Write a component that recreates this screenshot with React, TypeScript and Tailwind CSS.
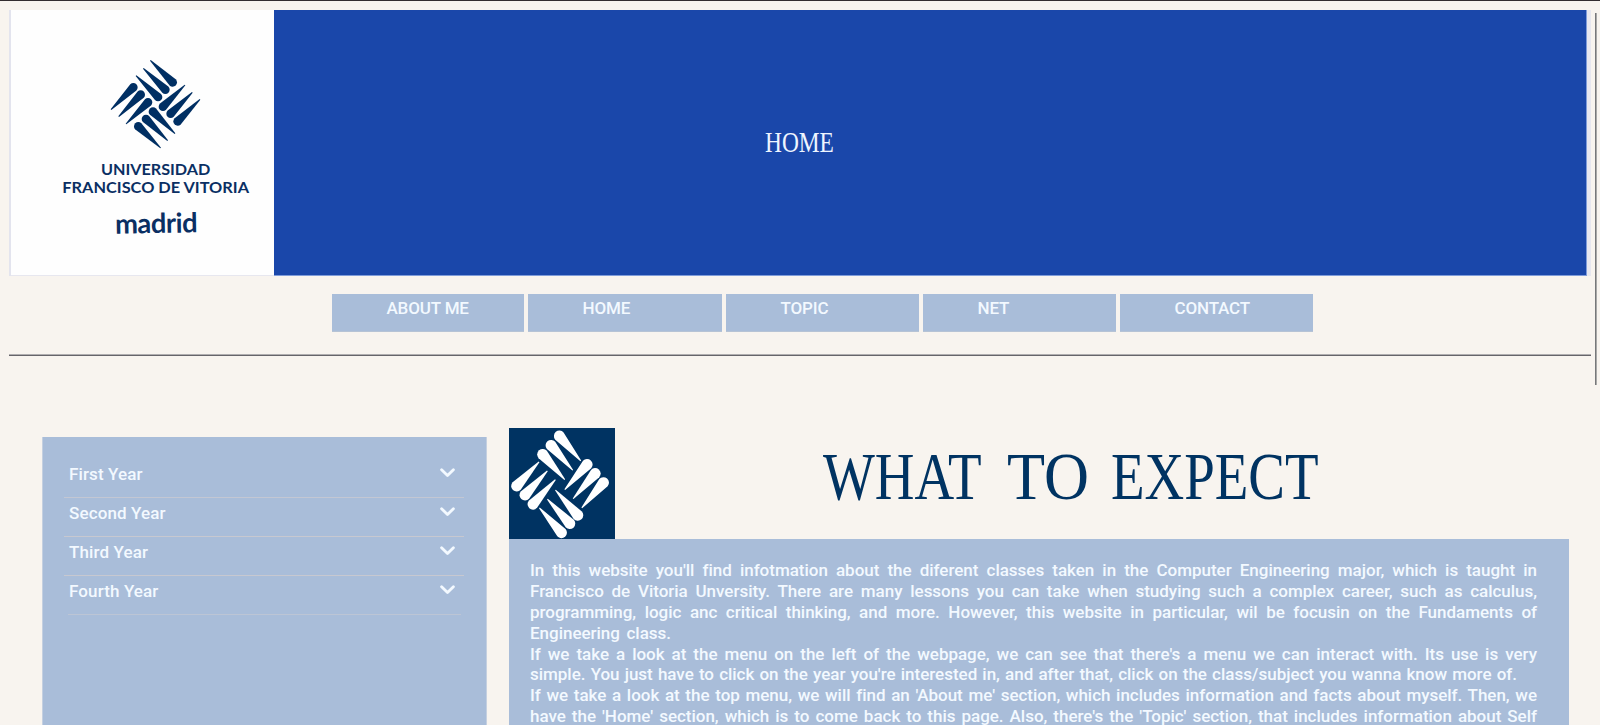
type Drop = [number, number, number, number];

const CREST: Drop[] = [
  [451, 181, 518, 247], [430, 205, 496, 269], [408, 227, 474, 291],
  [333, 329, 400, 262], [356, 350, 422, 284], [378, 372, 444, 307],
  [555, 255, 489, 320], [577, 277, 512, 341], [600, 298, 533, 364],
  [525, 401, 459, 335], [503, 422, 438, 357], [482, 444, 415, 379],
];

const EMBLEM: Drop[] = [
  [242, 122, 178, 48], [218, 150, 153, 76], [194, 178, 128, 103],
  [117, 125, 50, 197], [142, 152, 75, 224], [166, 178, 99, 251],
  [194, 208, 261, 133], [219, 235, 285, 160], [245, 262, 310, 187],
  [166, 209, 233, 284], [142, 236, 209, 309], [118, 262, 184, 336],
];

function dropPath([tx, ty, hx, hy]: Drop, r: number) {
  const len = Math.hypot(hx - tx, hy - ty);
  const px = (-(hy - ty) / len) * r;
  const py = ((hx - tx) / len) * r;
  const qx = (px / r) * 1.5;
  const qy = (py / r) * 1.5;
  return `M${tx + qx} ${ty + qy}L${hx + px} ${hy + py}A${r} ${r} 0 0 0 ${hx - px} ${hy - py}L${tx - qx} ${ty - qy}Z`;
}

function Crest() {
  return (
    <svg className="block h-[265px] w-[263px] shrink-0 bg-[#fefefe]" viewBox="33 30 789 795">
      <g fill="#002f63">
        {CREST.map((d, i) => (
          <path key={i} d={dropPath(d, 13)} />
        ))}
      </g>
      <g fill="#0a2f63" fontFamily="Lato, sans-serif" fontWeight="700">
        <text x="303" y="526" fontSize="47" textLength="328" lengthAdjust="spacingAndGlyphs">UNIVERSIDAD</text>
        <text x="187" y="578" fontSize="47" textLength="560" lengthAdjust="spacingAndGlyphs">FRANCISCO DE VITORIA</text>
        <text x="345" y="699" fontSize="82" textLength="248" lengthAdjust="spacing" transform="rotate(-1 468 670)">madrid</text>
      </g>
    </svg>
  );
}

function Emblem() {
  return (
    <svg className="block h-[111px] w-[105.5px] bg-[#003362]" viewBox="27 24 316 331" preserveAspectRatio="none">
      <g fill="#fff">
        {EMBLEM.map((d, i) => (
          <path key={i} d={dropPath(d, 16.5)} />
        ))}
      </g>
    </svg>
  );
}

const NAV = ["ABOUT ME", "HOME", "TOPIC", "NET", "CONTACT"];
const YEARS = ["First Year", "Second Year", "Third Year", "Fourth Year"];

const LINES: { text: string; style: string }[] = [
  { text: "In this website you'll find infotmation about the diferent classes taken in the Computer Engineering major, which is taught in", style: "w-[1007px] [text-align-last:justify]" },
  { text: "Francisco de Vitoria Unversity. There are many lessons you can take when studying such a complex career, such as calculus,", style: "w-[1007px] [text-align-last:justify]" },
  { text: "programming, logic anc critical thinking, and more. However, this website in particular, wil be focusin on the Fundaments of", style: "w-[1007px] [text-align-last:justify]" },
  { text: "Engineering class.", style: "w-[141px] [text-align-last:justify]" },
  { text: "If we take a look at the menu on the left of the webpage, we can see that there's a menu we can interact with. Its use is very", style: "w-[1007px] [text-align-last:justify]" },
  { text: "simple. You just have to click on the year you're interested in, and after that, click on the class/subject you wanna know more of.", style: "w-[987px] [text-align-last:justify]" },
  { text: "If we take a look at the top menu, we will find an 'About me' section, which includes information and facts about myself. Then, we", style: "w-[1007px] [text-align-last:justify]" },
  { text: "have the 'Home' section, which is to come back to this page. Also, there's the 'Topic' section, that includes information about Self", style: "w-[1007px] [text-align-last:justify]" },
];

export default function App() {
  return (
    <div className="flex h-[725px] w-[1600px] flex-col overflow-hidden border-t border-[#332d30] bg-[#f8f4ef] font-['Roboto',sans-serif] font-medium text-[#f3f9ff]">
      <div className="flex h-[384px] shrink-0">
        <div className="w-[1595px] pt-[9px]">
          <header className="ml-[9px] flex h-[266px] w-[1582px] border-l-2 border-[#e3e4ee] bg-[#e7e7ef]">
            <Crest />
            <div className="flex h-[266px] w-[1313px] items-center border-b border-r border-[#7f9cda] bg-[#1a47aa]">
              <span className="-mt-0.5 ml-[491px] origin-left scale-x-[0.78] font-['Liberation_Serif',serif] text-[30px] leading-none text-[#eef5ff]">HOME</span>
            </div>
          </header>
          <nav className="ml-[332px] mt-[18px] grid grid-cols-[192px_194px_193px_193px_193px] gap-1">
            {NAV.map((item) => (
              <a key={item} className="h-[38px] border-b border-[#b6c3d5] bg-[#a9bdd9] pl-[54.5px] pt-[3px] text-[17px] leading-[22px] tracking-[-0.15px]">{item}</a>
            ))}
          </nav>
          <hr className="ml-[9px] mt-[22px] h-[2px] w-[1582px] border-b border-t border-b-[#66656a] border-t-[#b0aeb0]" />
        </div>
        <div className="mt-[12px] h-[372px] w-[2px] border-l border-r border-l-[#77787a] border-r-[#a9a9a8]" />
      </div>
      <div className="flex h-[340px] shrink-0">
        <aside className="ml-[42px] mt-[52px] h-[288px] w-[445px] border-x border-[#c5d0e0] bg-[#a9bdd9] pl-[21px] pt-[22px]">
          {YEARS.map((year, i) => (
            <div
              key={year}
              className={
                i === 0
                  ? "flex h-[39px] w-[400px] items-start justify-between border-b border-[#c3c7d3] pl-[5px] pr-[9px] pt-[4px]"
                  : i === 3
                    ? "ml-1 flex h-[39px] w-[393px] items-start justify-between border-b border-[#bcc5d5] pl-[1px] pr-[6px] pt-[4px]"
                    : "flex h-[39px] w-[400px] items-start justify-between border-b border-[#c7c8d0] pl-[5px] pr-[9px] pt-[4px]"
              }
            >
              <span className="text-[17px] leading-[22px] tracking-[0.12px]">{year}</span>
              <svg className="mt-[5px] h-[10px] w-[15px]" viewBox="0 0 15 10" fill="none" stroke="#f3f9ff" strokeWidth="2.8" strokeLinecap="round" strokeLinejoin="round">
                <path d="M1.6 1.7L7.5 7.6L13.4 1.7" />
              </svg>
            </div>
          ))}
        </aside>
        <main className="ml-[22px] mt-[43px] w-[1060px]">
          <div className="flex h-[111px]">
            <Emblem />
            <h1 className="flex pl-[208px] pt-[11px] font-['Liberation_Serif',serif] text-[67px] font-normal leading-[74px] text-[#003362]">
              <span className="w-[184px] origin-left scale-x-[0.82]">WHAT</span>
              <span className="w-[104px] origin-left scale-x-[0.93]">TO</span>
              <span className="origin-left scale-x-[0.82]">EXPECT</span>
            </h1>
          </div>
          <section className="h-[190px] bg-[#a9bdd9] pl-[21px] pt-[21.4px]">
            {LINES.map((line) => (
              <p key={line.text} className={`h-[20.8px] whitespace-nowrap text-[17px] leading-[20.8px] tracking-[-0.02px] ${line.style}`}>{line.text}</p>
            ))}
          </section>
        </main>
      </div>
    </div>
  );
}
